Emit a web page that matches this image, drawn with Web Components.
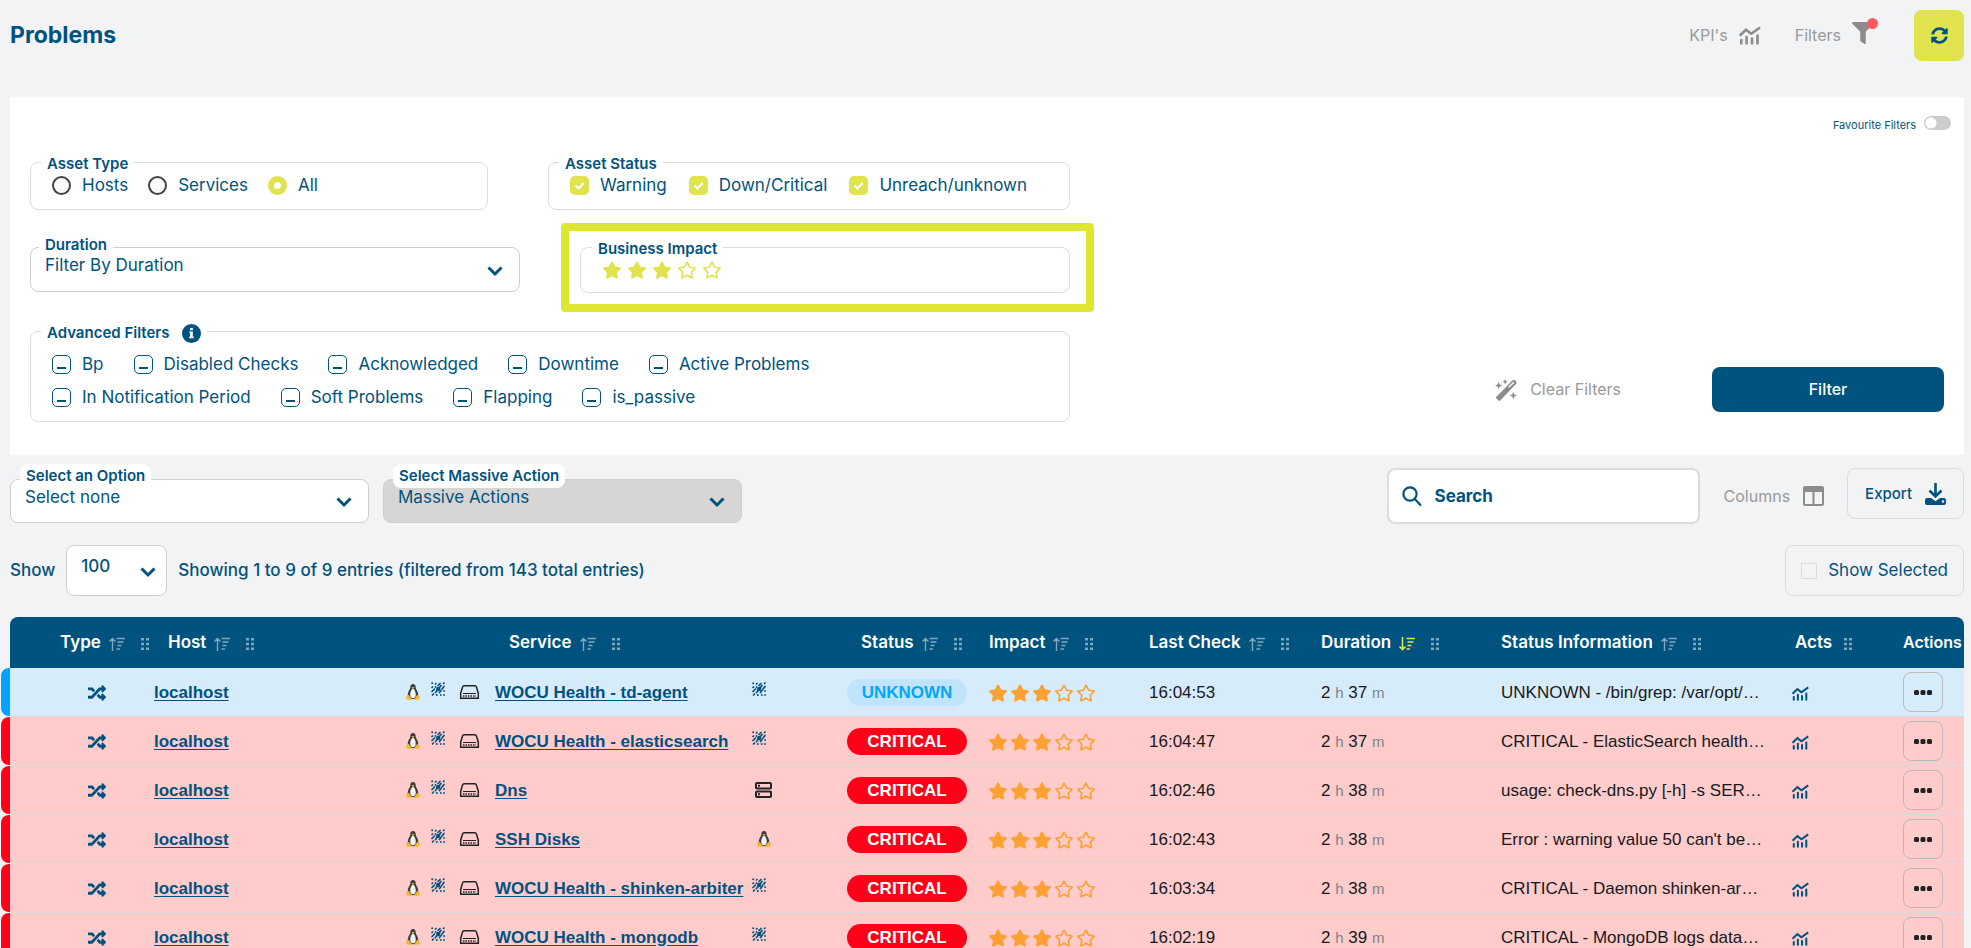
<!DOCTYPE html>
<html lang="en">
<head>
<meta charset="utf-8">
<title>Problems</title>
<style>
  html { scrollbar-width: none; }
  body {
    --navy: #00527f; --lime: #e0e24e; --grey: #8c8c8c; --line: #dcdcdc;
    margin: 0; background: #f2f3f5; color: var(--navy);
    font: 17px/21px Inter, "Liberation Sans", sans-serif;
  }
</style>
</head>
<body>
<problems-page></problems-page>
<script>
const define = (name, html, setup) => customElements.define(name, class extends HTMLElement {
  constructor() {
    super();
    this.attachShadow({ mode: 'open' });
  }
  connectedCallback() {
    if (this.shadowRoot.childNodes.length) return;
    const t = document.createElement('template');
    t.innerHTML = '<style>*{box-sizing:border-box}</style>' + (typeof html === 'function' ? html(this) : html);
    this.shadowRoot.append(t.content.cloneNode(true));
    if (setup) setup(this, this.shadowRoot);
  }
});

/* name: [width, height, viewBox, markup] */
const ICONS = {
  chart: [22, 20, '0 0 22 19', '<g fill="none" stroke="currentColor" stroke-width="2.6"><path d="M.7 9.2 7 3.2l5.2 4L21 1"/><path stroke-linecap="round" d="M2.3 13.5V17M7.6 10.5V17M13 12V17M18.5 9V17"/></g>'],
  funnel: [22, 22, '0 0 512 512', '<path d="M487.976 0H24.028C2.71 0-8.047 25.866 7.058 40.971L192 225.941V432c0 7.831 3.821 15.17 10.237 19.662l80 55.98C298.02 518.69 320 507.493 320 487.98V225.941l184.947-184.97C520.021 25.896 509.338 0 487.976 0z"/>'],
  sync: [17, 17, '0 0 512 512', '<path d="M370.72 133.28C339.458 104.008 298.888 87.962 255.848 88c-77.458.068-144.328 53.178-162.791 126.85-1.344 5.363-6.122 9.15-11.651 9.15H24.103c-7.498 0-13.194-6.807-11.807-14.176C33.933 94.924 134.813 8 256 8c66.448 0 126.791 26.136 171.315 68.685L463.03 40.97C478.149 25.851 504 36.559 504 57.941V192c0 13.255-10.745 24-24 24H345.941c-21.382 0-32.09-25.851-16.971-40.971l41.75-41.749zM32 296h134.059c21.382 0 32.09 25.851 16.971 40.971l-41.75 41.75c31.262 29.273 71.835 45.319 114.876 45.28 77.418-.07 144.315-53.144 162.787-126.849 1.344-5.363 6.122-9.15 11.651-9.15h57.304c7.498 0 13.194 6.807 11.807 14.176C478.067 417.076 377.187 504 256 504c-66.448 0-126.791-26.136-171.315-68.685L48.97 471.03C33.851 486.149 8 475.441 8 454.059V320c0-13.255 10.745-24 24-24z"/>'],
  info: [19, 19, '0 0 20 20', '<circle cx="10" cy="10" r="10"/><path fill="#fff" d="M8.6 4.2h2.8v2.4H8.6zM7.8 8h3.6v5.2h1V15H7.6v-1.8h1V9.8h-.8z"/>'],
  chevron: [16, 10, '0 0 16 10', '<path fill="none" stroke="currentColor" stroke-width="3" d="M1.5 1.5 8 8l6.500-6.500"/>'],
  search: [20, 20, '0 0 20 20', '<g fill="none" stroke="currentColor" stroke-width="2.200"><circle cx="8" cy="8" r="6.600"/><path stroke-linecap="round" d="m12.800 13 5.600 6"/></g>'],
  wand: [22, 22, '0 0 24 24', '<path d="m1.500 19.300 14.800-15c1.200-1.200 2.800-3.300 4.500-3.300 1.500 0 2.700 1.200 2.700 2.700 0 1.700-2 3.300-3.300 4.500L5.900 23.400c-.6.6-1.400.6-2 0l-2.400-2.100c-.6-.6-.6-1.400 0-2z"/><path stroke="#fff" stroke-width="1.600" d="m15 9 5.500-5.500"/><path d="m4 3 1.200 3L8 7 5.200 8.100 4 11 2.800 8.100 0 7l2.800-1zM11 0l.9 2.200 2.100.8-2.100.8L11 6l-.9-2.200L8 3l2.100-.8zM20 14l1.200 2.800L24 18l-2.800 1.200L20 22l-1.200-2.800L16 18l2.800-1.200z"/>'],
  columns: [21, 20, '0 0 21 20', '<path fill-rule="evenodd" d="M2 0h17a2 2 0 0 1 2 2v16a2 2 0 0 1-2 2H2a2 2 0 0 1-2-2V2a2 2 0 0 1 2-2zm0 6v12h7.500V6zm9.500 0v12H19V6z"/>'],
  download: [21, 22, '0 0 21 22', '<path fill="none" stroke="currentColor" stroke-width="2.600" d="M10.500 0v12M4.500 7.500l6 6 6-6"/><path d="M2 15h4l4.500 3.200L15 15h4a2 2 0 0 1 2 2v3a2 2 0 0 1-2 2H2a2 2 0 0 1-2-2v-3a2 2 0 0 1 2-2z"/><circle cx="18" cy="18.500" r="1.200" fill="#f2f3f5"/>'],
  sort: [16, 14, '0 0 16 14', '<path fill="none" stroke="currentColor" stroke-width="1.400" d="M3.500 14V2M.5 4.500l3-3 3 3M7.500 1.500h8.500M8.500 5h6M8.500 8.500h4M7.500 12h3.500"/>'],
  sortdown: [16, 14, '0 0 16 14', '<path fill="none" stroke="currentColor" stroke-width="1.600" d="M3.500 0v12M.5 9.500l3 3 3-3M7.500 1.500h8.500M8.500 5h6M8.500 8.500h4M7.500 12h3.500"/>'],
  grip: [8, 12, '0 0 8 12', '<path d="M0 0h3v2.500H0zM5 0h3v2.500H5zM0 4.700h3v2.500H0zM5 4.700h3v2.500H5zM0 9.400h3v2.500H0zM5 9.400h3v2.500H5z"/>'],
  shuffle: [18, 18, '0 0 512 512', '<path d="M504.971 359.029c9.373 9.373 9.373 24.569 0 33.941l-80 79.984c-15.01 15.01-40.971 4.49-40.971-16.971V416h-58.785a12.004 12.004 0 0 1-8.773-3.812l-70.556-75.596 53.333-57.143L352 336h32v-39.981c0-21.438 25.943-31.998 40.971-16.971l80 79.981zM12 176h84l52.781 56.551 53.333-57.143-70.556-75.596A11.999 11.999 0 0 0 122.785 96H12c-6.627 0-12 5.373-12 12v56c0 6.627 5.373 12 12 12zm372 0v39.984c0 21.460 25.961 31.980 40.971 16.971l80-79.984c9.373-9.373 9.373-24.569 0-33.941l-80-79.981C409.943 24.021 384 34.582 384 56.019V96h-58.785a12.004 12.004 0 0 0-8.773 3.812L96 336H12c-6.627 0-12 5.373-12 12v56c0 6.627 5.373 12 12 12h110.785c3.326 0 6.503-1.381 8.773-3.812L352 176h32z"/>'],
  tux: [14, 16, '0 0 14 16', '<path fill="#3b3f42" d="M7 0c2 0 2.700 1.500 2.700 3.500 0 1.800 2.600 4 2.600 7.500 0 2.400-1.600 4.200-5.300 4.200S1.700 13.400 1.700 11c0-3.500 2.600-5.700 2.600-7.500C4.300 1.500 5 0 7 0z"/><path fill="#f4f4f2" d="M7 4.800c1.200 0 2.800 3 2.800 6 0 2-1.200 3.400-2.800 3.400s-2.800-1.400-2.800-3.400c0-3 1.600-6 2.800-6z"/><path fill="#f7b520" d="M5.400 3.500 7 2.900l1.600.6L7 5zM.4 12.400l2.300-1.600 3 4.200-1.200 1-4-.8zM13.600 12.400l-2.300-1.600-3 4.200 1.200 1 4-.8z"/>'],
  weave: [14, 14, '0 0 14 14', '<path fill="none" stroke="currentColor" stroke-width="1.700" stroke-linecap="round" d="M1 5.500 1.500 5M4.500 2 5 1.500M1 9.500l2.500-2.500M7 3.500l2-2M4.500 10.500 10 3.500M12.500 1.500 13 1M8.500 10.500l1.500-2M11 7l2-2.500M1.500 13l1-1"/><g fill="currentColor"><circle cx="7.200" cy="7" r="2.200"/><circle cx="1.200" cy="1.200" r="1"/><circle cx="4.500" cy="5" r=".9"/><circle cx="13" cy="13" r=".9"/><circle cx="9.800" cy="13" r=".9"/><circle cx="5.800" cy="13" r="1"/><circle cx="13" cy="9" r=".9"/></g>'],
  drive: [19, 14, '0 0 19 14', '<g fill="none" stroke="#222" stroke-width="1.500"><path d="M4 .7h11c.8 0 1.200.5 1.400 1.200l1.900 6.300v5H.7v-5l1.900-6.300C2.800 1.200 3.200.7 4 .7z"/><path d="M3 8.500h13" stroke-width="1"/><path stroke-dasharray="1.500 1" d="M3 11h13"/></g>'],
  server: [17, 16, '0 0 17 16', '<g fill="none" stroke="#222" stroke-width="2"><rect x="1" y="1" width="15" height="5.500" rx="1"/><rect x="1" y="9.500" width="15" height="5.500" rx="1"/><path d="M3 3.800h2M3 12.200h2"/></g>'],
  star: [18, 18, '20 0 536 512', '<path d="M259.3 17.8L194 150.2 47.9 171.5c-26.2 3.8-36.7 36.1-17.7 54.6l105.700 103-25 145.500c-4.500 26.300 23.200 46 46.400 33.700L288 439.600l130.700 68.700c23.200 12.200 50.900-7.400 46.400-33.700l-25-145.500 105.700-103c19-18.500 8.500-50.800-17.700-54.600L382 150.200 316.700 17.800c-11.700-23.600-45.600-23.900-57.400 0z"/>'],
  staro: [18, 18, '20 0 536 512', '<path d="M528.1 171.5L382 150.2 316.7 17.8c-11.7-23.600-45.600-23.900-57.400 0L194 150.200 47.900 171.500c-26.200 3.800-36.700 36.100-17.700 54.600l105.700 103-25 145.500c-4.500 26.300 23.200 46 46.400 33.700L288 439.600l130.700 68.700c23.200 12.200 50.900-7.400 46.400-33.700l-25-145.500 105.700-103c19-18.500 8.500-50.800-17.700-54.600zM388.600 312.300l23.700 138.400L288 385.400l-124.300 65.300 23.700-138.400-100.600-98 139-20.200 62.200-126 62.200 126 139 20.200-100.600 98z"/>'],
  more: [18, 5, '0 0 18 5', '<rect width="5" height="5" rx="1.500"/><rect x="6.500" width="5" height="5" rx="1.500"/><rect x="13" width="5" height="5" rx="1.500"/>']
};

define('ui-icon', el => {
  const [w, h, box, body] = ICONS[el.getAttribute('name')];
  return `<style>:host{display:inline-block;flex:none;width:${w}px;height:${h}px}svg{display:block;width:100%;height:100%;overflow:visible}</style>
  <svg viewBox="${box}" fill="currentColor" aria-hidden="true">${body}</svg>`;
});

define('star-rating', el => `<style>:host{display:inline-flex;gap:var(--star-gap,4px);color:var(--star-color,#ffa033)}</style>
  ${[1, 2, 3, 4, 5].map(n => `<ui-icon name="${n <= +el.getAttribute('value') ? 'star' : 'staro'}"></ui-icon>`).join('')}`);

define('field-group', el => `<style>
  :host{display:block}
  fieldset{margin:0;min-width:0;border:1px solid var(--line);border-radius:8px;padding:var(--pad,1px 21px 13px)}
  legend{display:flex;align-items:center;gap:12px;height:24px;margin-left:-11px;padding:4px 6px 0;font-size:15px;line-height:20px;font-weight:600}
  </style><fieldset><legend>${el.getAttribute('label')}<slot name="hint"></slot></legend><slot></slot></fieldset>`);

define('choice-item', el => {
  const radio = el.getAttribute('kind') === 'radio';
  return `<style>
  :host{display:block}
  label{display:flex;align-items:center;gap:11px;white-space:nowrap}
  input{appearance:none;flex:none;width:19px;height:19px;margin:0;border:1px solid var(--navy);border-radius:5px;background:#fff}
  input:indeterminate{background:linear-gradient(var(--navy),var(--navy)) 50% 11px/9px 2px no-repeat #fff}
  input[type=radio]{border:2px solid #444;border-radius:50%;background:#fafafa}
  input[type=checkbox]:checked{border:0;background:var(--lime) url("data:image/svg+xml,%3Csvg xmlns='http://www.w3.org/2000/svg' viewBox='0 0 19 19'%3E%3Cpath d='M5.500 9.500l3 3 5-5.500' fill='none' stroke='white' stroke-width='2.200'/%3E%3C/svg%3E")}
  input[type=radio]:checked{border:6px solid var(--lime);background:#fff}
  </style><label><input type="${radio ? 'radio' : 'checkbox'}" name="asset"${el.hasAttribute('checked') ? ' checked' : ''}><span><slot></slot></span></label>`;
}, (el, root) => {
  if (el.hasAttribute('mixed')) root.querySelector('input').indeterminate = true;
});

define('select-box', el => `<style>
  :host{display:block;position:relative}
  .box{display:grid;align-items:center}
  select,ui-icon{grid-area:1/1}
  select{appearance:none;width:100%;height:var(--h,45px);margin:0;padding:0 40px 8px 14px;border:1px solid #cfcfcf;border-radius:8px;background:var(--fill,#fff);color:inherit;font:inherit;opacity:1}
  ui-icon{justify-self:end;margin:2px var(--chevron-x,17px) 0 0;pointer-events:none}
  label{position:absolute;left:var(--label-x,10px);top:var(--label-y,-15px);padding:2px 6px;border-radius:8px;background:#fff;font-size:15px;line-height:20px;font-weight:600;white-space:nowrap}
  </style>${el.getAttribute('label') ? `<label for="s">${el.getAttribute('label')}</label>` : ''}
  <div class="box"><select id="s" aria-label="${el.getAttribute('label') || 'Entries'}"${el.hasAttribute('disabled') ? ' disabled' : ''}><option>${el.getAttribute('value')}</option></select><ui-icon name="chevron"></ui-icon></div>`);

define('toggle-switch', `<style>
  label{display:flex;align-items:flex-start;gap:8px;font-size:11px;line-height:18px}
  input{appearance:none;width:27px;height:14px;margin:0;border-radius:7px;background:radial-gradient(circle at 7px 7px,#fff 5px,#ccc 6px)}
  </style><label><slot></slot><input type="checkbox" role="switch"></label>`);

define('page-header', `<style>
  :host{display:flex;align-items:flex-start;justify-content:space-between;padding:10px 7px 0 10px;height:97px}
  h1{margin:11px 0 0;font-size:23px;line-height:28px;font-weight:700}
  nav{display:flex;align-items:center;color:var(--grey)}
  button{border:0;padding:0;background:none;font:inherit;color:inherit}
  .link{display:flex;align-items:center;gap:11px;font-size:16px;margin-right:34px}
  .text{color:#999}
  .filters{margin-right:40px}
  .badge{position:relative;display:flex;margin-bottom:6px}
  .badge::after{content:"";position:absolute;right:-4px;top:-4px;width:11px;height:11px;border-radius:50%;background:#ff5a5f}
  .go{display:grid;place-items:center;width:50px;height:51px;border-radius:8px;background:var(--lime);color:var(--navy)}
  </style><h1>Problems</h1><nav>
  <button class="link"><span class="text">KPI's</span><ui-icon name="chart"></ui-icon></button>
  <button class="link filters"><span class="text">Filters</span><span class="badge"><ui-icon name="funnel"></ui-icon></span></button>
  <button class="go" aria-label="Refresh"><ui-icon name="sync"></ui-icon></button></nav>`);

define('filter-panel', `<style>
  :host{display:grid;grid-template-columns:1064fr 850fr;margin:0 7px 0 10px;padding:0 20px 33px;background:#fff}
  form{display:grid;padding-top:53px}
  .top{display:grid;grid-template-columns:458fr 522fr;gap:60px;margin-right:24px}
  .mid{display:grid;grid-template-columns:490fr 533fr;gap:41px;align-items:start;margin-top:13px}
  .mid select-box{margin-top:24px;--label-x:9px;--label-y:-14px}
  .mark{height:89px;padding:4px 16px 0 11px;border:8px solid #dde732;border-radius:4px}
  .mark field-group{--pad:2px 22px 13px}
  star-rating{display:flex;--star-gap:7px;--star-color:var(--lime)}
  .adv{margin:7px 24px 0 0;--pad:11px 21px 13px}
  .row{display:flex;gap:20px}
  .status{gap:22px}
  .wide{gap:30px}
  .wide + .wide{margin-top:12px}
  aside{display:flex;flex-direction:column;justify-content:space-between;align-items:flex-end;padding-top:19px}
  toggle-switch{margin-right:-7px}
  .act{display:flex;align-items:center;justify-content:flex-end;gap:91px;margin-bottom:10px}
  button{display:flex;align-items:center;justify-content:center;border:0;padding:0;font:inherit;font-size:16px}
  .clear{gap:13px;background:none;color:var(--grey)}
  .clear span{color:#999}
  .go{width:232px;height:45px;border-radius:8px;background:var(--navy);color:#fff;font-weight:500}
  </style>
  <form>
    <div class="top">
      <field-group label="Asset Type"><div class="row"><choice-item kind="radio">Hosts</choice-item><choice-item kind="radio">Services</choice-item><choice-item kind="radio" checked>All</choice-item></div></field-group>
      <field-group label="Asset Status"><div class="row status"><choice-item checked>Warning</choice-item><choice-item checked>Down/Critical</choice-item><choice-item checked>Unreach/unknown</choice-item></div></field-group>
    </div>
    <div class="mid">
      <select-box label="Duration" value="Filter By Duration"></select-box>
      <div class="mark"><field-group label="Business Impact"><star-rating value="3"></star-rating></field-group></div>
    </div>
    <field-group class="adv" label="Advanced Filters"><ui-icon slot="hint" name="info"></ui-icon>
      <div class="row wide"><choice-item mixed>Bp</choice-item><choice-item mixed>Disabled Checks</choice-item><choice-item mixed>Acknowledged</choice-item><choice-item mixed>Downtime</choice-item><choice-item mixed>Active Problems</choice-item></div>
      <div class="row wide"><choice-item mixed>In Notification Period</choice-item><choice-item mixed>Soft Problems</choice-item><choice-item mixed>Flapping</choice-item><choice-item mixed>is_passive</choice-item></div>
    </field-group>
  </form>
  <aside><toggle-switch>Favourite Filters</toggle-switch>
    <div class="act"><button class="clear"><ui-icon name="wand"></ui-icon><span>Clear Filters</span></button><button class="go">Filter</button></div>
  </aside>`, (el, root) => {
  /* one radio group across separate shadow roots */
  const radios = [...root.querySelectorAll('choice-item[kind=radio]')];
  radios.forEach(r => r.addEventListener('click', () => radios.forEach(o => {
    if (o !== r) o.shadowRoot.querySelector('input').checked = false;
  })));
});

define('table-tools', `<style>
  :host{display:grid;gap:21px;padding:13px 7px 21px 10px}
  .row{display:flex;align-items:flex-start;justify-content:space-between}
  .set{display:flex;align-items:flex-start}
  .picks{flex:1;gap:14px;padding-top:11px;--h:44px}
  .picks select-box{flex:0 1 359px}
  .off{--fill:#d8d6d4}
  .search{display:flex;align-items:center;gap:13px;width:313px;height:56px;padding:0 13px;border:2px solid var(--line);border-radius:8px;background:#fff}
  .search input{flex:1;min-width:0;padding:0;border:0;outline:0;background:none;font:inherit;font-weight:700;color:inherit}
  .search input::placeholder{color:inherit;opacity:1}
  button,.check{display:flex;align-items:center;height:51px;border:1px solid var(--line);border-radius:8px;padding:0 17px;gap:13px;background:none;color:inherit;font:inherit;font-size:15px}
  .cols{height:56px;border:0;padding:0 23px 0 24px;color:var(--grey);font-size:16px}
  .cols span{color:#999}
  .export{font-weight:500}
  .count{align-items:center;font-weight:500;gap:11px}
  .count select-box{width:101px;--h:51px;--chevron-x:11px}
  .check{padding:0 15px;gap:11px;font-size:17px}
  .check input{appearance:none;width:16px;height:16px;margin:0;border:1px solid var(--line);background:#f2f3f5}
  </style>
  <div class="row">
    <div class="set picks"><select-box label="Select an Option" value="Select none"></select-box><select-box class="off" label="Select Massive Action" value="Massive Actions"></select-box></div>
    <div class="set"><label class="search"><ui-icon name="search"></ui-icon><input type="search" placeholder="Search" aria-label="Search"></label>
    <button class="cols"><span>Columns</span><ui-icon name="columns"></ui-icon></button>
    <button class="export">Export<ui-icon name="download"></ui-icon></button></div>
  </div>
  <div class="row">
    <div class="set count"><span>Show</span><select-box value="100"></select-box><span>Showing 1 to 9 of 9 entries (filtered from 143 total entries)</span></div>
    <label class="check"><input type="checkbox">Show Selected</label>
  </div>`);

define('status-badge', el => `<style>
  :host{display:inline-grid;place-items:center;width:120px;height:27px;border-radius:14px;background:#ff0018;color:#fff;font-weight:700}
  :host([level=UNKNOWN]){background:#bfe4fb;color:#05a7f7}
  </style><span>${el.getAttribute('level')}</span>`);

const ROWS = [
  ['WOCU Health - td-agent', 'weave', 'UNKNOWN', '16:04:53', 37, 'UNKNOWN - /bin/grep: /var/opt/…'],
  ['WOCU Health - elasticsearch', 'weave', 'CRITICAL', '16:04:47', 37, 'CRITICAL - ElasticSearch health…'],
  ['Dns', 'server', 'CRITICAL', '16:02:46', 38, 'usage: check-dns.py [-h] -s SER…'],
  ['SSH Disks', 'tux', 'CRITICAL', '16:02:43', 38, "Error : warning value 50 can't be…"],
  ['WOCU Health - shinken-arbiter', 'weave', 'CRITICAL', '16:03:34', 38, 'CRITICAL - Daemon shinken-ar…'],
  ['WOCU Health - mongodb', 'weave', 'CRITICAL', '16:02:19', 39, 'CRITICAL - MongoDB logs data…']
];
const COLS = [['Type', 144], ['Host', 241], ['Service', 452], ['Status', 142], ['Impact', 160], ['Last Check', 172], ['Duration', 180], ['Status Information', 291], ['Acts', 111], ['Actions', 61]];

define('problem-table', () => `<style>
  :host{display:block;margin:0 7px 0 10px}
  table{width:100%;table-layout:fixed;border-collapse:separate;border-spacing:0;white-space:nowrap}
  th,td{padding:0;text-align:left;font-weight:inherit}
  thead tr{height:51px}
  th{background:var(--navy);color:#fff}
  th:first-child{border-top-left-radius:8px;padding-left:50px}
  th:last-child{border-top-right-radius:8px}
  th.host,th.status{padding-left:14px}
  th.service{padding-left:114px}
  th.acts{padding-left:3px}
  .head{display:flex;align-items:center;font-weight:600;font-size:17px}
  .actions .head{font-size:16px}
  .head ui-icon{margin:2px 0 0 8px;color:#7fa8bf}
  .head ui-icon[name=grip]{margin-left:16px}
  .acts .head ui-icon[name=grip]{margin-left:12px}
  .head ui-icon[name=sortdown]{color:var(--lime)}
  tbody{font:17px/21px "Liberation Sans",Arial,sans-serif;color:#16191c}
  tbody tr{--row:#ffcbcb;--tab:#ff0018}
  tbody tr.UNKNOWN{--row:#d6ecfa;--tab:#00a3ff}
  td{height:49px;border-bottom:1px solid #d9d9d9;background:var(--row)}
  td:first-child{position:relative;padding-left:78px;color:var(--navy)}
  td:first-child::before{content:"";position:absolute;left:-9px;top:0;width:9px;height:48px;border-radius:8px 0 0 8px;background:var(--tab)}
  td ui-icon,td star-rating,td status-badge{vertical-align:middle}
  a{color:var(--navy);font-weight:700;text-underline-offset:2px}
  .svc{display:flex;align-items:center;padding-left:11px;color:var(--navy)}
  .svc ui-icon[name=weave]{margin:0 15px 6px 11px}
  .svc div{flex:none;width:275px;margin-left:16px}
  .svc .last{margin-left:-15px}
  .svc .last[name=weave]{margin:0 0 6px -18px}
  .svc .last[name=tux]{margin-left:-13px}
  small{font-size:15px;color:#7d8488}
  .chart ui-icon{width:17px;height:16px;margin-top:2px;color:var(--navy)}
  td button{display:grid;place-items:center;width:40px;height:40px;padding:0;border:1px solid #b9b9b9;border-radius:8px;background:none;color:#222}
  </style><table>
  <colgroup>${COLS.map(c => `<col style="width:${c[1]}px">`).join('')}</colgroup>
  <thead><tr>${COLS.map(([c]) => `<th scope="col" class="${c.toLowerCase().replace(' ', '-')}"><div class="head">${c}${
    /^Act/.test(c) ? '' : `<ui-icon name="${c === 'Duration' ? 'sortdown' : 'sort'}"></ui-icon>`}${c === 'Actions' ? '' : '<ui-icon name="grip"></ui-icon>'}</div></th>`).join('')}</tr></thead>
  <tbody>${ROWS.map(([name, icon, level, time, min, info]) => `<tr class="${level}">
    <td><ui-icon name="shuffle"></ui-icon></td>
    <td><a href="#host">localhost</a></td>
    <td><div class="svc"><ui-icon name="tux"></ui-icon><ui-icon name="weave"></ui-icon><ui-icon name="drive"></ui-icon><div><a href="#service">${name}</a></div><ui-icon class="last" name="${icon}"></ui-icon></div></td>
    <td><status-badge level="${level}"></status-badge></td>
    <td><star-rating value="3"></star-rating></td>
    <td>${time}</td>
    <td>2 <small>h</small> ${min} <small>m</small></td>
    <td>${info}</td>
    <td class="chart"><ui-icon name="chart"></ui-icon></td>
    <td><button aria-label="More actions"><ui-icon name="more"></ui-icon></button></td></tr>`).join('')}</tbody></table>`);

define('problems-page', `<style>:host{display:block}</style>
  <page-header></page-header>
  <main><filter-panel></filter-panel><table-tools></table-tools><problem-table></problem-table></main>`);
</script>
</body>
</html>
